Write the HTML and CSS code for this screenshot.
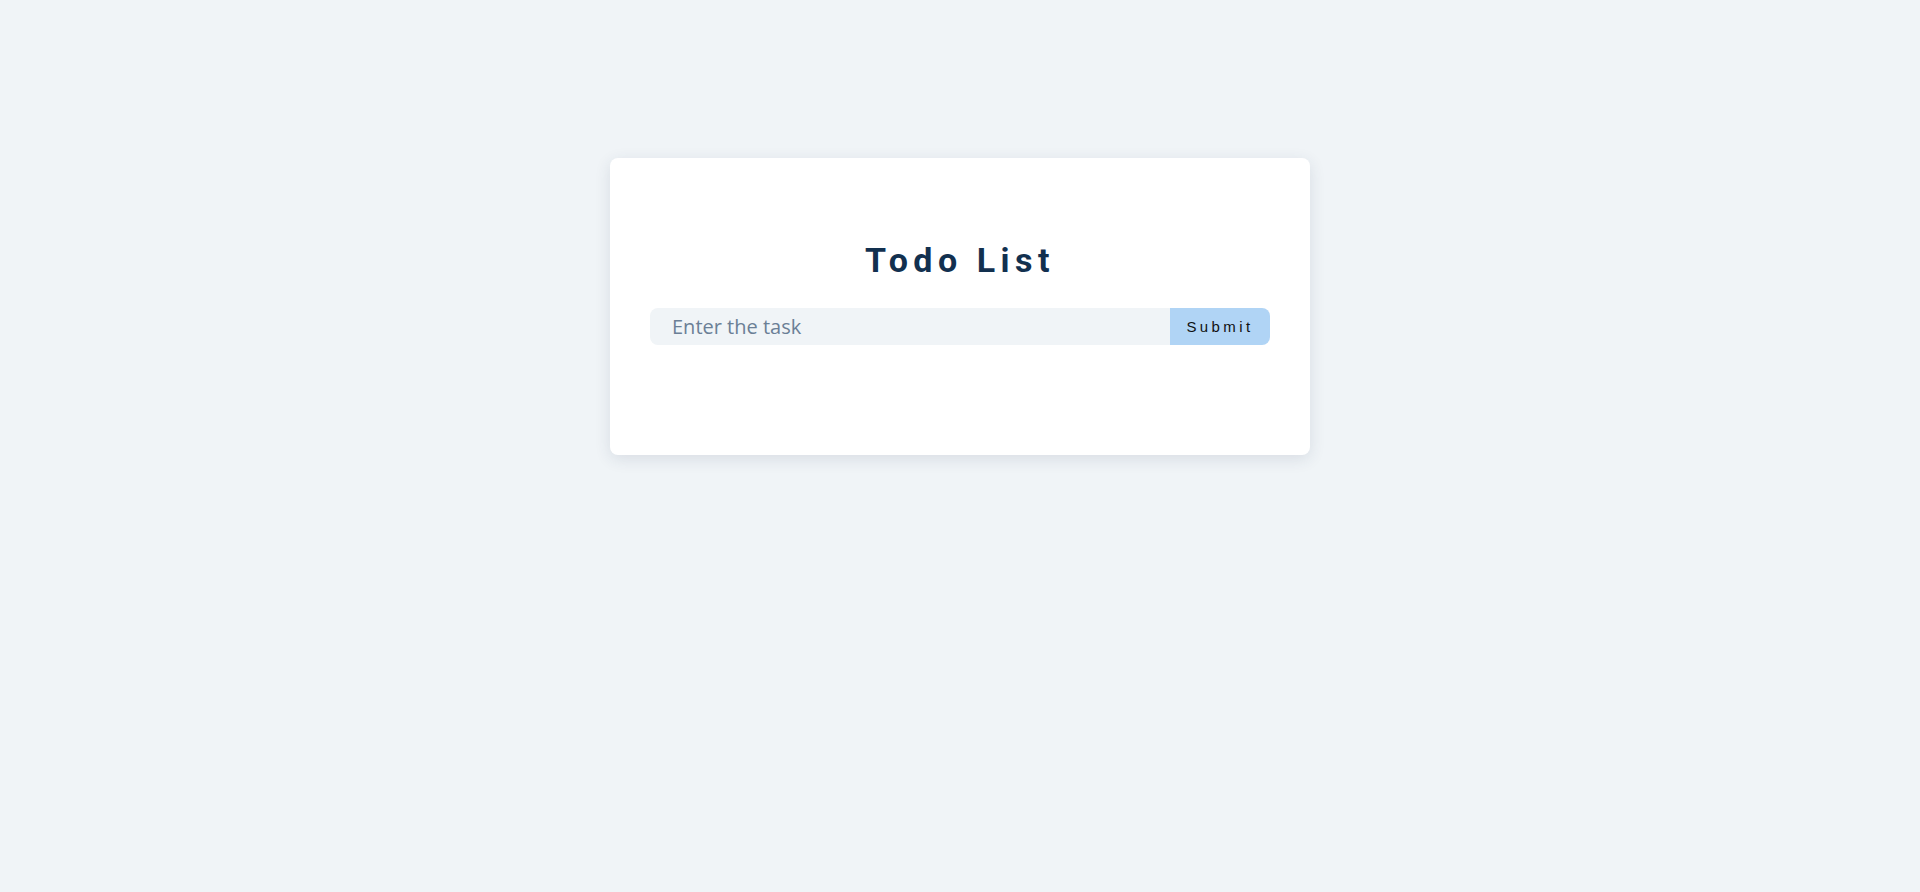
FILE: index.html
```html
<!DOCTYPE html>
<html lang="en">
<head>
<meta charset="utf-8">
<title>Todo List</title>
<link rel="stylesheet" href="styles.css">
</head>
<body>
<main class="page">
  <section class="card">
    <h1 class="title">Todo List</h1>
    <form class="task-form">
      <input class="task-input" type="text" placeholder="Enter the task">
      <button class="task-submit" type="button">Submit</button>
    </form>
    <ul class="task-list"></ul>
  </section>
</main>
</body>
</html>
```
FILE: styles.css
```css
* { box-sizing: border-box; }
html, body {
  margin: 0;
  padding: 0;
  background: #f0f4f7;
  height: 100%;
}
.page {
  display: flex;
  justify-content: center;
  padding-top: 158px;
}
.card {
  width: 700px;
  background: #ffffff;
  border-radius: 8px;
  box-shadow: 0 4px 16px rgba(40, 60, 90, 0.12);
  padding: 41px 40px 40px;
  display: flex;
  flex-direction: column;
}
.title {
  margin: 41px 0 28px;
  text-align: center;
  font-family: Roboto, "Liberation Sans", sans-serif;
  font-weight: 700;
  font-size: 34px;
  line-height: 40px;
  letter-spacing: 5.5px;
  color: #12304f;
}
.task-form {
  display: flex;
  height: 37px;
  margin: 0;
}
.task-input {
  flex: 1;
  border: none;
  outline: none;
  background: #f0f4f7;
  border-radius: 8px 0 0 8px;
  padding: 0 0 0 22px;
  font-family: "Open Sans", sans-serif;
  font-size: 20px;
  color: #333;
}
.task-input::placeholder {
  color: #6b7f96;
}
.task-submit {
  width: 100px;
  border: none;
  background: #b0d4f5;
  border-radius: 0 8px 8px 0;
  font-family: "Liberation Sans", Arial, sans-serif;
  font-size: 15px;
  letter-spacing: 3.4px;
  color: #111;
  padding: 0;
  cursor: pointer;
}
.task-list {
  list-style: none;
  margin: 0;
  padding: 0;
  height: 70px;
}
```
